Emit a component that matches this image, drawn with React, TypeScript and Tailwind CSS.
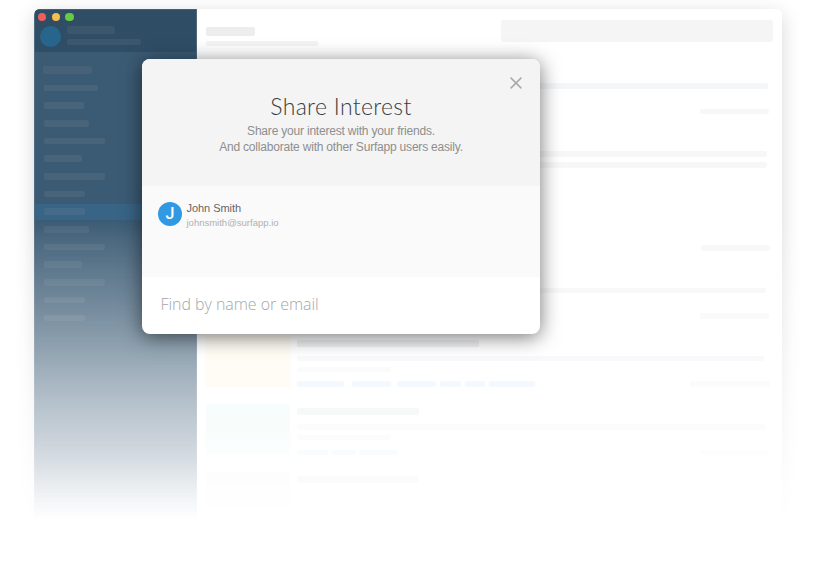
import React from "react";

const navItems = [54, 40, 44.5, 61, 38, 61, 40.5, 40.5, 44.5, 61, 38, 61, 40.5, 40.5];
const ACTIVE_ITEM = 7;

type Entry = {
  image: string;
  title: number;
  titleColor: string;
  line: number;
  lineColor: string;
  short: number;
  shortColor: string;
  tags: { w: number; gap: number }[];
  meta: number;
  metaEnd: number;
};

const entries: Entry[] = [
  { image: "#f3f3f3", title: 122, titleColor: "#eeeeee", line: 471, lineColor: "#f5f6f8", short: 94, shortColor: "#f7f7f7", tags: [], meta: 69, metaEnd: 769 },
  { image: "#f3f3f3", title: 122, titleColor: "#eeeeee", line: 469.5, lineColor: "#f7f7f7", short: 469.5, shortColor: "#f7f7f7", tags: [], meta: 0, metaEnd: 769 },
  { image: "#f3f3f3", title: 122, titleColor: "#eeeeee", line: 200, lineColor: "#f5f6f8", short: 94, shortColor: "#f7f7f7", tags: [], meta: 69, metaEnd: 770 },
  { image: "#f3f3f3", title: 122, titleColor: "#eeeeee", line: 468.5, lineColor: "#f4f6f5", short: 94, shortColor: "#f7f7f7", tags: [], meta: 69, metaEnd: 768.5 },
  {
    image: "#fff9eb", title: 182, titleColor: "#e6e8eb", line: 467, lineColor: "#f3f4f8", short: 94, shortColor: "#f5f7f5",
    tags: [{ w: 46.5, gap: 8 }, { w: 39.5, gap: 5.5 }, { w: 39.5, gap: 4 }, { w: 20.5, gap: 4 }, { w: 20.5, gap: 3.5 }, { w: 46, gap: 0 }],
    meta: 80, metaEnd: 770,
  },
  {
    image: "#e9f9f6", title: 122, titleColor: "#e7ebeb", line: 468.5, lineColor: "#f4f6f6", short: 93.5, shortColor: "#f4f4f4",
    tags: [{ w: 31, gap: 3 }, { w: 24.5, gap: 3 }, { w: 39.5, gap: 0 }],
    meta: 68, metaEnd: 768,
  },
  { image: "#f2f2f2", title: 122, titleColor: "#e3e3e3", line: 0, lineColor: "#fff", short: 0, shortColor: "#fff", tags: [], meta: 0, metaEnd: 769 },
];

function Sidebar() {
  return (
    <aside className="flex w-[163px] shrink-0 flex-col border-x border-white/10 bg-[#3b5b74]">
      <header className="h-[43px] border-t border-white/10 bg-[#2f4e66] pl-[2.5px]">
        <div className="flex gap-[5.3px] pt-[2.7px] pl-[0.6px]">
          <span className="size-[8.3px] rounded-full bg-[#ee5f5a]" />
          <span className="size-[8.3px] rounded-full bg-[#f6be4c]" />
          <span className="size-[8.3px] rounded-full bg-[#64cb42]" />
        </div>
        <div className="flex gap-[6px] pl-[2.5px] pt-[5.5px]">
          <span className="size-[21px] rounded-full bg-[#28658c]" />
          <div className="flex flex-col gap-[5px]">
            <span className="h-[8px] w-[48px] rounded-[2px] bg-white/[0.055]" />
            <span className="h-[5.5px] w-[74px] rounded-[2px] bg-white/[0.055]" />
          </div>
        </div>
      </header>
      <div className="pl-[8px] pt-[13.5px] pb-[5.2px]">
        <div className="h-[8.5px] w-[48.5px] rounded-[2px] bg-[#8d8d94]/15" />
      </div>
      <nav>
        {navItems.map((w, i) => (
          <div
            key={i}
            className={`flex h-[17.68px] items-center bg-clip-content py-[0.7px] ${i === ACTIVE_ITEM ? "bg-[#386485]" : ""}`}
          >
            <span className="ml-[9px] h-[6.5px] rounded-[2px] bg-[#b0b0b8]/[0.11]" style={{ width: w }} />
          </div>
        ))}
      </nav>
    </aside>
  );
}

function EntryRow({ e }: { e: Entry }) {
  return (
    <div className="flex h-[68.2px] shrink-0 gap-[7px] pl-[9.2px]">
      <div className="h-[51px] w-[84.3px] shrink-0" style={{ background: e.image }} />
      <div className="min-w-0 flex-1">
        <div className="mt-[4px] h-[7px] rounded-[2px]" style={{ width: e.title, background: e.titleColor }} />
        <div className="mt-[9.4px] h-[5.5px] rounded-[2px]" style={{ width: e.line, background: e.lineColor }} />
        <div className="mt-[5.2px] h-[5.5px] rounded-[2px]" style={{ width: e.short, background: e.shortColor }} />
        <div className="mt-[9.3px] flex h-[5.5px]">
          {e.tags.map((t, i) => (
            <span key={i} className="h-full shrink-0 rounded-[2px] bg-[#e4f2ff]" style={{ width: t.w, marginRight: t.gap }} />
          ))}
          <span
            className="ml-auto h-full shrink-0 rounded-[2px] bg-[#f7f7f7]"
            style={{ width: e.meta, marginRight: 781.5 - e.metaEnd }}
          />
        </div>
      </div>
    </div>
  );
}

function AppWindow() {
  return (
    <div className="h-[575px] pl-[34px] pt-[9px] [mask-image:linear-gradient(to_bottom,#000_0,#000_219px,rgba(0,0,0,.9)_245px,rgba(0,0,0,.76)_290px,rgba(0,0,0,.63)_330px,rgba(0,0,0,.49)_370px,rgba(0,0,0,.38)_402px,rgba(0,0,0,.21)_460px,rgba(0,0,0,.09)_491px,transparent_520px)]">
      <div className="h-[560px] w-[747.5px] rounded-[6px] shadow-[0_5px_20px_rgba(0,0,0,.16)]">
        <div className="flex h-full overflow-hidden rounded-[6px] bg-white">
          <Sidebar />
          <main className="flex min-w-0 flex-1 flex-col">
            <header className="flex h-[53.8px] shrink-0 justify-between pl-[9.3px] pr-[8.5px]">
              <div className="flex flex-col gap-[5px] pt-[18px]">
                <span className="h-[8.5px] w-[48.5px] rounded-[2px] bg-[#ededed]" />
                <span className="h-[5.5px] w-[112px] rounded-[2px] bg-[#f3f3f3]" />
              </div>
              <div className="mt-[11px] h-[21.7px] w-[272px] rounded-[2px] bg-[#f5f5f5]" />
            </header>
            {entries.map((e, i) => (
              <EntryRow key={i} e={e} />
            ))}
          </main>
        </div>
      </div>
    </div>
  );
}

function ShareDialog() {
  return (
    <section className="absolute left-[142px] top-[59px] flex h-[275px] w-[398px] flex-col overflow-hidden rounded-[8px] bg-white shadow-[0_3px_20px_rgba(0,0,0,.55)]">
      <header className="h-[127px] bg-[#f4f4f4] text-center">
        <div className="flex h-[33px] justify-end pr-[18px] pt-[18px]">
          <svg className="shrink-0" width="12" height="12" viewBox="0 0 12 12" fill="none" stroke="#a9a9a9" strokeWidth="1.5">
            <path d="M.6.6 11.4 11.4M11.4.6.6 11.4" />
          </svg>
        </div>
        <h1 className="h-[31px] font-['Lato',sans-serif] text-[23px] font-light leading-[28px] tracking-[0.32px] text-[#3a3c40]">Share Interest</h1>
        <p className="font-['Liberation_Sans',Arial,sans-serif] text-[12px] leading-[16px] tracking-[-0.2px] text-[#8e8e8e]">
          Share your interest with your friends.
          <br />
          And collaborate with other Surfapp users easily.
        </p>
      </header>
      <div className="flex h-[91px] gap-[4.5px] bg-[#fafafa] pl-[16px] pt-[16px] font-['Liberation_Sans',Arial,sans-serif]">
        <div className="flex size-[24px] items-center justify-center rounded-full bg-[#3199e3] font-['Roboto',sans-serif] text-[16px] font-medium text-white">J</div>
        <div>
          <div className="h-[14px] text-[11px] leading-[13px] tracking-[-0.05px] text-[#666]">John Smith</div>
          <div className="text-[9.5px] leading-[14px] text-[#b0b0b0]">johnsmith@surfapp.io</div>
        </div>
      </div>
      <div className="flex-1 pl-[18.5px] pt-[15px]">
        <div className="font-['Open_Sans',sans-serif] text-[16px] font-light leading-[24px] tracking-[-0.05px] text-[#a3a7aa]">Find by name or email</div>
      </div>
    </section>
  );
}

export default function App() {
  return (
    <div className="relative h-[575px] w-[815px] overflow-hidden bg-white">
      <AppWindow />
      <ShareDialog />
    </div>
  );
}
